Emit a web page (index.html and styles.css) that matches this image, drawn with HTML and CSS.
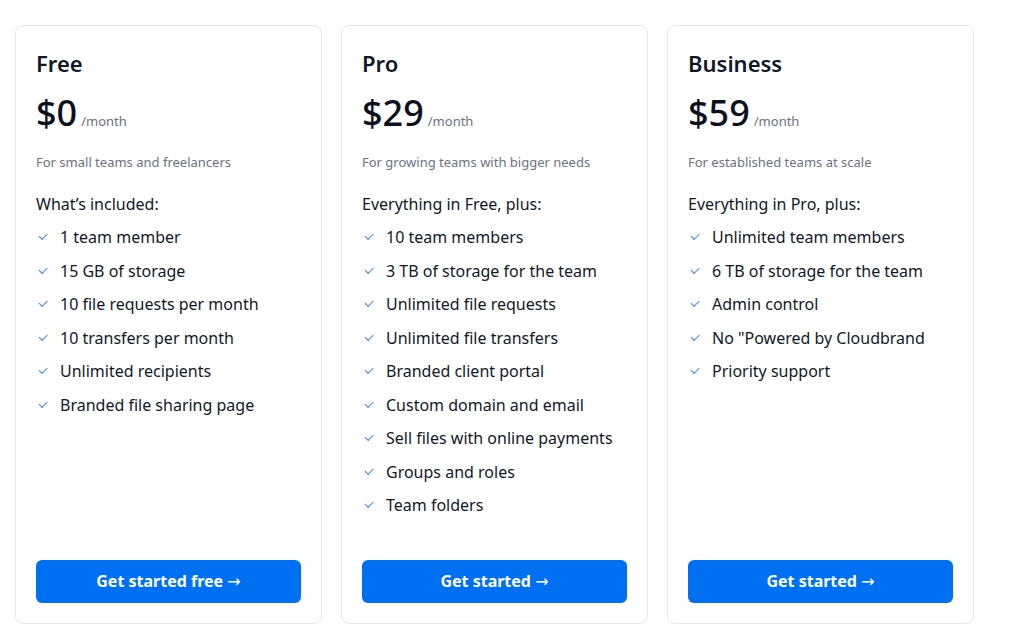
FILE: index.html
```html
<!DOCTYPE html>
<html lang="en">
<head>
    <meta charset="UTF-8">
    <meta name="viewport" content="width=device-width, initial-scale=1.0">
    <title>Pricing</title>
    <link rel="stylesheet" href="styles.css">
</head>
<body>
    <div class="plans">
        <!-- Free plan -->
        <div class="plan">
            <h3 class="plan-name">Free</h3>
            <div class="price"><span class="amount">$0</span><span class="period">/month</span></div>
            <p class="tagline">For small teams and freelancers</p>
            <p class="includes">What’s included:</p>
            <ul class="features">
                <li>1 team member</li>
                <li>15 GB of storage</li>
                <li>10 file requests per month</li>
                <li>10 transfers per month</li>
                <li>Unlimited recipients</li>
                <li>Branded file sharing page</li>
            </ul>
            <a href="#" class="btn">Get started free <span class="arrow">→</span></a>
        </div>

        <!-- Pro plan -->
        <div class="plan">
            <h3 class="plan-name">Pro</h3>
            <div class="price"><span class="amount">$29</span><span class="period">/month</span></div>
            <p class="tagline">For growing teams with bigger needs</p>
            <p class="includes">Everything in Free, plus:</p>
            <ul class="features">
                <li>10 team members</li>
                <li>3 TB of storage for the team</li>
                <li>Unlimited file requests</li>
                <li>Unlimited file transfers</li>
                <li>Branded client portal</li>
                <li>Custom domain and email</li>
                <li>Sell files with online payments</li>
                <li>Groups and roles</li>
                <li>Team folders</li>
            </ul>
            <a href="#" class="btn">Get started <span class="arrow">→</span></a>
        </div>

        <!-- Business plan -->
        <div class="plan">
            <h3 class="plan-name">Business</h3>
            <div class="price"><span class="amount">$59</span><span class="period">/month</span></div>
            <p class="tagline">For established teams at scale</p>
            <p class="includes">Everything in Pro, plus:</p>
            <ul class="features">
                <li>Unlimited team members</li>
                <li>6 TB of storage for the team</li>
                <li>Admin control</li>
                <li>No "Powered by Cloudbrand</li>
                <li>Priority support</li>
            </ul>
            <a href="#" class="btn">Get started <span class="arrow">→</span></a>
        </div>
    </div>
</body>
</html>
```

FILE: styles.css
```css
body {
    margin: 0;
    font-family: "Noto Sans", "Open Sans", sans-serif;
    color: #111827;
    background: #fff;
}
.plans {
    display: grid;
    grid-template-columns: repeat(3, 307px);
    gap: 19px;
    padding: 25px 15px;
}
.plan {
    display: flex;
    flex-direction: column;
    border: 1px solid #e5e7eb;
    border-radius: 8px;
    padding: 21px 20px 20px;
    min-height: 556px;
}
.plan-name {
    margin: 0;
    font-size: 22px;
    font-weight: 600;
    line-height: 32px;
}
.price {
    display: flex;
    align-items: baseline;
    margin-top: 9px;
}
.amount {
    font-size: 36px;
    font-weight: 500;
    line-height: 50px;
    color: #0b1120;
}
.period {
    font-size: 13px;
    color: #6b7280;
    margin-left: 4px;
}
.tagline {
    margin: 14px 0 0;
    font-size: 13px;
    line-height: 20px;
    color: #6b7280;
}
.includes {
    margin: 20px 0 0;
    font-size: 16px;
    line-height: 24px;
    color: #111827;
}
.features {
    list-style: none;
    margin: 5px 0 0;
    padding: 0;
    font-size: 16px;
    color: #111827;
}
.features li {
    position: relative;
    padding-left: 24px;
    line-height: 33.5px;
}
.features li::before {
    content: "";
    position: absolute;
    left: 3px;
    top: 12px;
    width: 7px;
    height: 3.5px;
    border-left: 1.4px solid #3b82f6;
    border-bottom: 1.4px solid #3b82f6;
    transform: rotate(-45deg);
}
.btn {
    margin-top: auto;
    display: block;
    height: 43px;
    line-height: 43px;
    text-align: center;
    background-color: #0070f3;
    color: #fff;
    font-weight: 700;
    font-size: 16px;
    text-decoration: none;
    border-radius: 6px;
}
.arrow {
    font-family: "DejaVu Sans", sans-serif;
    font-weight: 400;
}
```
